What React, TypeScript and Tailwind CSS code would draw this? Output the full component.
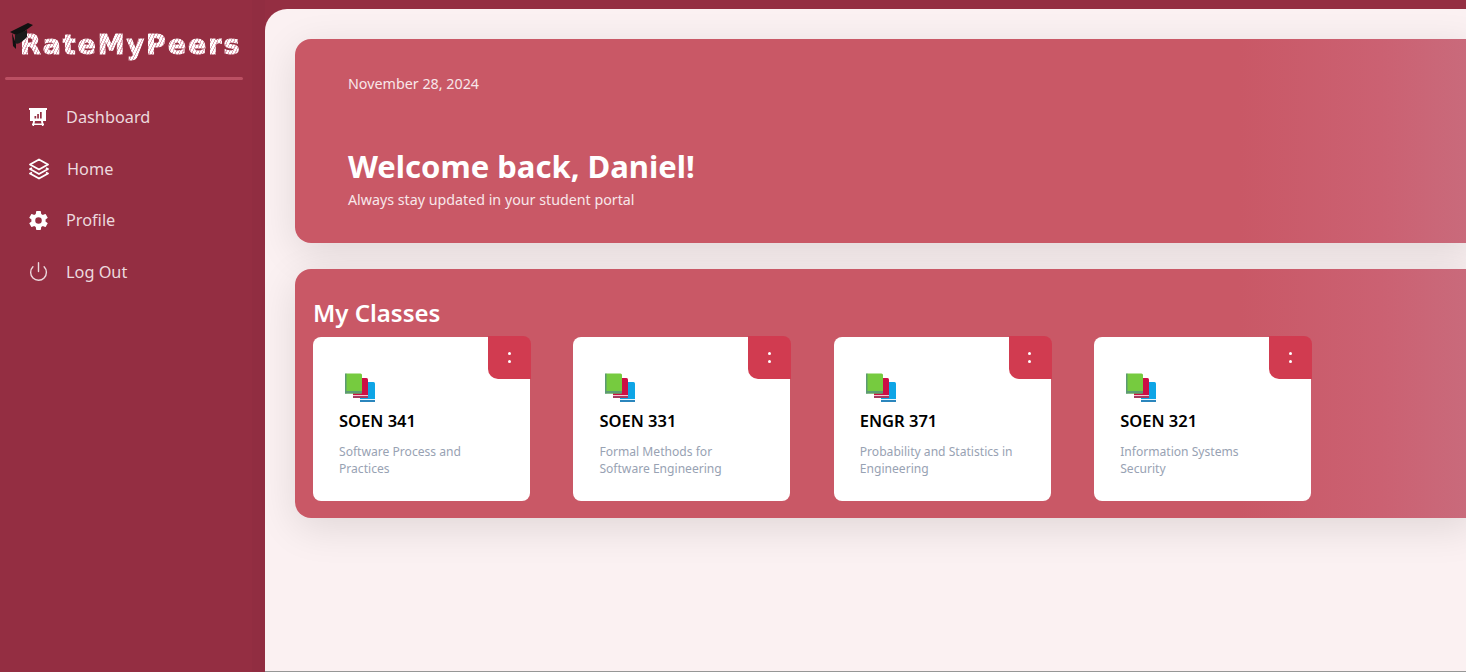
import { Power } from "lucide-react";
import { IoSettingsSharp } from "react-icons/io5";

const classes = [
  { code: "SOEN 341", name: "Software Process and Practices" },
  { code: "SOEN 331", name: "Formal Methods for Software Engineering" },
  { code: "ENGR 371", name: "Probability and Statistics in Engineering" },
  { code: "SOEN 321", name: "Information Systems Security" },
];

function GradCap() {
  return (
    <svg viewBox="0 0 26 28" className="absolute z-10 left-[9px] top-[22px] w-[26px] h-[28px]">
      <path d="M1 10 L19 1 L24 3 L9 14 Z" fill="#111" />
      <path d="M6 13 L6 21 C9 23 13 20 18 15 L18 8 Z" fill="#1b1b1b" />
      <path d="M3 11 L4 24 L7 27 L7 22 Z" fill="#111" />
    </svg>
  );
}

function EaselIcon() {
  return (
    <svg viewBox="0 0 20 20" className="w-5 h-5 shrink-0" fill="#fff">
      <path d="M1 1 H19 V3 H18 V14 H2 V3 H1 Z" />
      <path d="M5 14 H7 L6 19 H4.5 Z M13 14 H15 L15.5 19 H14 Z M4 16.5 H16 V18 H4 Z" />
      <rect x="6.5" y="9" width="1.7" height="2.5" fill="#942e42" />
      <rect x="9.2" y="7" width="1.7" height="4.5" fill="#942e42" />
      <rect x="12" y="5" width="1.7" height="6.5" fill="#942e42" />
    </svg>
  );
}

function LayersIcon() {
  return (
    <svg viewBox="0 0 22 22" className="w-[22px] h-[22px] shrink-0 ml-[2px]" fill="none" stroke="#fff" strokeWidth="1.9" strokeLinejoin="round">
      <path d="M11 1.5 L20 6.5 L11 11.5 L2 6.5 Z" />
      <path d="M4 10 L2 11 L11 16 L20 11 L18 10" />
      <path d="M4 14.5 L2 15.5 L11 20.5 L20 15.5 L18 14.5" />
    </svg>
  );
}

function BooksIcon() {
  return (
    <svg viewBox="0 0 32 30" className="w-8 h-[30px] ml-[5px]">
      <rect x="16" y="9" width="15" height="20" rx="1.5" fill="#0ea5e6" />
      <rect x="16" y="26" width="15" height="1" fill="#e6f6fd" />
      <rect x="16" y="27" width="15" height="2" fill="#2b86bd" />
      <rect x="9" y="5" width="15" height="20" rx="1.5" fill="#cc0f45" />
      <rect x="9" y="22" width="15" height="1" fill="#f7c6d4" />
      <rect x="9" y="23" width="15" height="2" fill="#a83a5e" />
      <rect x="1" y="0.5" width="17" height="20" rx="1.5" fill="#76cb3f" />
      <rect x="1" y="18" width="17" height="2.5" fill="#5c9a73" />
      <rect x="1" y="0.5" width="1.5" height="20" fill="#5c9a73" />
    </svg>
  );
}

function NavItem({ icon, label, gap, labelClass = "" }: { icon: React.ReactNode; label: string; gap: string; labelClass?: string }) {
  return (
    <div className={`flex items-center h-[24px] ${gap}`}>
      <span className="w-5 flex justify-center">{icon}</span>
      <span className={`text-[16.3px] text-[#ecd9de] ${labelClass}`}>{label}</span>
    </div>
  );
}

function ClassCard({ code, name }: { code: string; name: string }) {
  return (
    <div className="relative w-[217px] h-[164px] bg-white rounded-[8px] pl-[26px] pt-[36px] shrink-0">
      <div className="absolute right-[-1px] top-[-1px] w-[43px] h-[43px] bg-[#d13b50] rounded-tr-[8px] rounded-bl-[10px] flex flex-col items-center justify-center gap-[5px] pr-[1px]">
        <span className="w-[3px] h-[3px] rounded-full bg-white" />
        <span className="w-[3px] h-[3px] rounded-full bg-white" />
      </div>
      <BooksIcon />
      <div className="mt-[6px] text-[16.5px] leading-[24px] font-semibold text-black">{code}</div>
      <div className="mt-[10px] w-[160px] text-[12.1px] leading-[17px] text-[#98a2b3]">{name}</div>
    </div>
  );
}

export default function App() {
  return (
    <div className="relative flex h-[672px] w-[1466px] overflow-hidden bg-[#942e42] font-['Noto_Sans','Open_Sans',sans-serif]">
      <aside className="relative w-[252px] shrink-0 pl-[5px]">
        <GradCap />
        <div className="h-[77px] pt-[26px] pl-[15px]">
          <div className="font-['DejaVu_Sans',sans-serif] font-bold text-[27px] leading-[38px] tracking-[1.9px] text-transparent [-webkit-text-stroke:1px_transparent] bg-clip-text bg-[repeating-linear-gradient(115deg,#ffffff_0px,#ffffff_2px,#e3a9b8_2px,#e3a9b8_3px)]">
            RateMyPeers
          </div>
        </div>
        <div className="h-[3px] w-[238px] rounded-full bg-[#bb5063]" />
        <nav className="mt-[25px] pl-[23px] flex flex-col gap-[27.6px]">
          <NavItem icon={<EaselIcon />} label="Dashboard" gap="gap-[18px]" />
          <NavItem icon={<LayersIcon />} label="Home" gap="gap-[19px]" labelClass="mt-[2px]" />
          <NavItem icon={<IoSettingsSharp className="w-[21px] h-[21px] text-white shrink-0" />} label="Profile" gap="gap-[18px]" />
          <NavItem icon={<Power className="w-[21px] h-[21px] text-[#ecd9de] shrink-0" strokeWidth={1.6} />} label="Log Out" gap="gap-[18px]" />
        </nav>
      </aside>
      <div className="w-[13px] shrink-0 bg-[#912d41]" />
      <main className="mt-[9px] flex-1 rounded-tl-[22px] bg-[#fbf1f2] pl-[30px] pt-[30px] border-b border-[#969696]">
        <section className="h-[204px] w-[1180px] rounded-l-[16px] bg-[linear-gradient(90deg,#c95866_0%,#c95866_80%,#cb6172_92%,#c96b7c_100%)] pl-[53px] pt-[35px] shadow-[0_10px_40px_rgba(0,0,0,0.11)]">
          <div className="text-[14.3px] leading-[20px] text-[#f8e7ea]">November 28, 2024</div>
          <h1 className="mt-[52px] text-[31px] leading-[40px] font-bold text-white">Welcome back, Daniel!</h1>
          <p className="mt-[5px] text-[14.25px] leading-[18px] text-[#f8e7ea]">Always stay updated in your student portal</p>
        </section>
        <section className="mt-[26px] h-[249px] w-[1180px] rounded-l-[16px] bg-[linear-gradient(90deg,#c95866_0%,#c95866_80%,#cb6172_92%,#c96b7c_100%)] pl-[18px] pt-[25px] shadow-[0_10px_40px_rgba(0,0,0,0.11)]">
          <h2 className="text-[24px] leading-[38px] font-semibold text-white">My Classes</h2>
          <div className="mt-[5px] flex gap-[43.4px]">
            {classes.map((c) => (
              <ClassCard key={c.code} code={c.code} name={c.name} />
            ))}
          </div>
        </section>
      </main>
    </div>
  );
}
